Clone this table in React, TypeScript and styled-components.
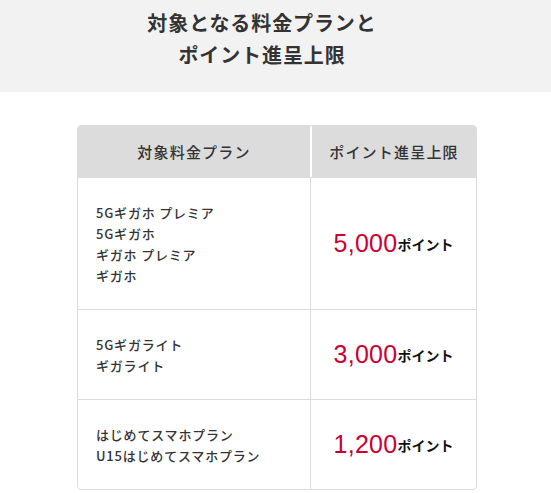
import React from "react";
import styled, { createGlobalStyle } from "styled-components";

const Global = createGlobalStyle`
  html, body { margin: 0; padding: 0; background: #fff; }
  body { font-family: "Noto Sans CJK JP", "Noto Sans", sans-serif; color: #333; }
`;

const Banner = styled.header`
  background: #f2f2f2;
  height: 92px;
  box-sizing: border-box;
  padding: 7px 27px 0 0;
  text-align: center;
`;

const Title = styled.h1`
  margin: 0;
  font-size: 20px;
  line-height: 32px;
  font-weight: 700;
  letter-spacing: 0.9px;
  color: #333;
`;

const Table = styled.div`
  margin: 33px 0 0 77px;
  width: 400px;
  box-sizing: border-box;
  border: 1px solid #dcdcdc;
  border-radius: 4px;
  overflow: hidden;
`;

const Row = styled.div<{ $head?: boolean }>`
  display: grid;
  grid-template-columns: 232px 1fr;
  column-gap: ${(p) => (p.$head ? "2px" : "0")};
  border-top: ${(p) => (p.$head ? "none" : "1px solid #dcdcdc")};
`;

const HeadCell = styled.div`
  background: #dcdcdc;
  height: 51px;
  display: flex;
  align-items: center;
  justify-content: center;
  font-size: 15px;
  font-weight: 500;
  letter-spacing: 1.2px;
  color: #333;
`;

const PlanCell = styled.div`
  padding: 24px 10px 23px 18px;
  font-size: 13px;
  line-height: 21px;
  font-weight: 500;
  letter-spacing: 0.8px;
  color: #333;
`;

const ValueCell = styled.div`
  border-left: 1px solid #dcdcdc;
  display: flex;
  align-items: center;
  justify-content: center;
`;

const Amount = styled.span`
  font-family: "Liberation Sans", Arial, sans-serif;
  font-size: 25px;
  color: #cc0033;
  letter-spacing: 0.3px;
`;

const Unit = styled.span`
  font-size: 14px;
  font-weight: 700;
  color: #111;
  letter-spacing: 0;
`;

const rows = [
  { plans: ["5Gギガホ プレミア", "5Gギガホ", "ギガホ プレミア", "ギガホ"], amount: "5,000" },
  { plans: ["5Gギガライト", "ギガライト"], amount: "3,000" },
  { plans: ["はじめてスマホプラン", "U15はじめてスマホプラン"], amount: "1,200" },
];

export default function App() {
  return (
    <>
      <Global />
      <Banner>
        <Title>
          対象となる料金プランと
          <br />
          ポイント進呈上限
        </Title>
      </Banner>
      <Table>
        <Row $head>
          <HeadCell>対象料金プラン</HeadCell>
          <HeadCell>ポイント進呈上限</HeadCell>
        </Row>
        {rows.map((r) => (
          <Row key={r.amount}>
            <PlanCell>
              {r.plans.map((p) => (
                <div key={p}>{p}</div>
              ))}
            </PlanCell>
            <ValueCell>
              <Amount>{r.amount}</Amount>
              <Unit>ポイント</Unit>
            </ValueCell>
          </Row>
        ))}
      </Table>
    </>
  );
}
